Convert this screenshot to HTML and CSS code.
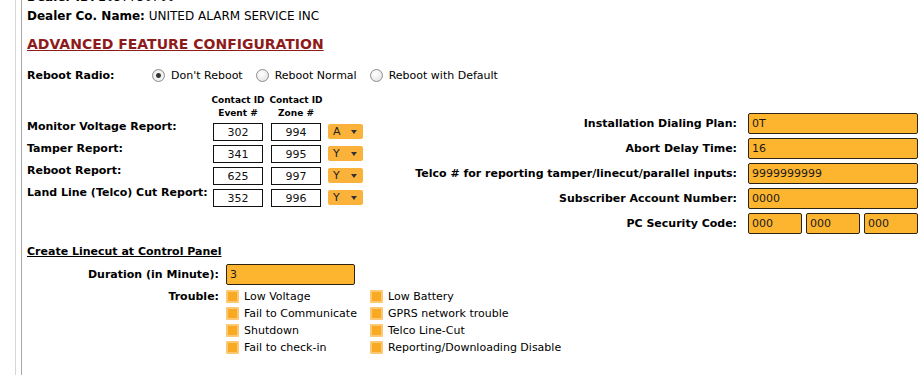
FILE: index.html
```html
<!DOCTYPE html>
<html lang="en">
<head>
  <meta charset="UTF-8" />
  <meta name="viewport" content="width=device-width, initial-scale=1.0"/>
  <title>Advanced Feature Configuration</title>
  <link rel="stylesheet" href="styles.css">
</head>
<body>
  <div class="page">
    <div class="panel">
      <div class="dealer">
        <div><b>Dealer ID:</b> 2057730700</div>
        <div><b>Dealer Co. Name:</b> UNITED ALARM SERVICE INC</div>
      </div>

      <h2 class="section-title">ADVANCED FEATURE CONFIGURATION</h2>

      <div class="reboot">
        <span class="reboot-label">Reboot Radio:</span>
        <label class="radio"><input type="radio" name="reboot" checked /> Don't Reboot</label>
        <label class="radio"><input type="radio" name="reboot" /> Reboot Normal</label>
        <label class="radio"><input type="radio" name="reboot" /> Reboot with Default</label>
      </div>

      <div class="config">
        <div class="reports">
          <div></div>
          <div class="col-head">Contact ID<br>Event #</div>
          <div class="col-head">Contact ID<br>Zone #</div>
          <div></div>

          <div class="report-label">Monitor Voltage Report:</div>
          <div><input class="code" type="text" value="302" /></div>
          <div><input class="code" type="text" value="994" /></div>
          <div><span class="pick">A</span></div>

          <div class="report-label">Tamper Report:</div>
          <div><input class="code" type="text" value="341" /></div>
          <div><input class="code" type="text" value="995" /></div>
          <div><span class="pick">Y</span></div>

          <div class="report-label">Reboot Report:</div>
          <div><input class="code" type="text" value="625" /></div>
          <div><input class="code" type="text" value="997" /></div>
          <div><span class="pick">Y</span></div>

          <div class="report-label">Land Line (Telco) Cut Report:</div>
          <div><input class="code" type="text" value="352" /></div>
          <div><input class="code" type="text" value="996" /></div>
          <div><span class="pick">Y</span></div>
        </div>

        <div class="dialing">
          <div class="field-label">Installation Dialing Plan:</div>
          <input class="field" type="text" value="0T" />

          <div class="field-label">Abort Delay Time:</div>
          <input class="field" type="text" value="16" />

          <div class="field-label">Telco # for reporting tamper/linecut/parallel inputs:</div>
          <input class="field" type="text" value="9999999999" />

          <div class="field-label">Subscriber Account Number:</div>
          <input class="field" type="text" value="0000" />

          <div class="field-label">PC Security Code:</div>
          <div class="pc-code">
            <input class="field" type="text" value="000" />
            <input class="field" type="text" value="000" />
            <input class="field" type="text" value="000" />
          </div>
        </div>
      </div>

      <h3 class="sub-title">Create Linecut at Control Panel</h3>

      <div class="linecut">
        <div class="field-label">Duration (in Minute):</div>
        <input class="field duration" type="text" value="3" />
      </div>

      <div class="linecut">
        <div class="field-label trouble-label">Trouble:</div>
        <div class="trouble">
          <label class="check"><span class="box"></span>Low Voltage</label>
          <label class="check"><span class="box"></span>Low Battery</label>
          <label class="check"><span class="box"></span>Fail to Communicate</label>
          <label class="check"><span class="box"></span>GPRS network trouble</label>
          <label class="check"><span class="box"></span>Shutdown</label>
          <label class="check"><span class="box"></span>Telco Line-Cut</label>
          <label class="check"><span class="box"></span>Fail to check-in</label>
          <label class="check"><span class="box"></span>Reporting/Downloading Disable</label>
        </div>
      </div>
    </div>
  </div>
</body>
</html>
```

FILE: styles.css
```css
body {
  margin: 0;
  font-family: "DejaVu Sans", Verdana, sans-serif;
  font-size: 11px;
  color: #000;
  background: #fff;
}
.page {
  margin-left: 15px;
  border-left: 1px solid #d6d6d6;
  padding-left: 5px;
  min-height: 100vh;
}
.panel {
  display: flow-root;
  border-left: 1px solid #a9a9a9;
  padding: 0 5px;
  min-height: 100vh;
}
.dealer {
  margin-top: -12px;
  font-size: 12px;
  line-height: 19px;
}
.section-title {
  margin: 9px 0 0;
  font-size: 14px;
  line-height: 18px;
  color: #8e1b1b;
  text-decoration: underline;
}

.reboot {
  display: flex;
  align-items: center;
  margin-top: 14px;
  height: 16px;
}
.reboot-label {
  width: 125px;
  font-weight: bold;
}
.radio {
  display: flex;
  align-items: center;
  margin-right: 13px;
}
.radio input {
  appearance: none;
  -webkit-appearance: none;
  width: 13px;
  height: 13px;
  margin: 0 6px 0 0;
  border: 1px solid #8d8d8d;
  border-radius: 50%;
  background: radial-gradient(circle at 40% 35%, #ffffff 0%, #ececec 60%, #d6d6d6 100%);
}
.radio input:checked {
  background: radial-gradient(circle, #2c2c2c 0, #3a3a3a 2px, #f4f4f4 3px, #e2e2e2 100%);
}

.config {
  display: flex;
  margin-top: 11px;
}
.reports {
  display: grid;
  grid-template-columns: 186px 58px 57px 35px;
  grid-auto-rows: 22px;
  grid-template-rows: 26px;
}
.col-head {
  width: 50px;
  font-size: 9px;
  font-weight: bold;
  line-height: 13px;
  text-align: center;
  white-space: nowrap;
  display: flex;
  flex-direction: column;
  align-items: center;
}
.report-label {
  font-weight: bold;
  line-height: 13px;
  white-space: nowrap;
}
.code {
  box-sizing: border-box;
  width: 50px;
  height: 18px;
  margin: 3px 0 0;
  padding: 0;
  border: 1px solid #111;
  font: 11px "DejaVu Sans", Verdana, sans-serif;
  text-align: center;
  color: #111;
  background: #fff;
}
.pick {
  display: flex;
  align-items: center;
  box-sizing: border-box;
  width: 35px;
  height: 15px;
  margin-top: 4px;
  padding-left: 5px;
  border-radius: 2px;
  background: #fbb23a;
  color: #222;
}
.pick::after {
  content: "";
  margin: 0 6px 0 auto;
  border-left: 3px solid transparent;
  border-right: 3px solid transparent;
  border-top: 4px solid #333;
}

.dialing {
  flex: 1;
  display: grid;
  grid-template-columns: 1fr 170px;
  grid-auto-rows: 21px;
  column-gap: 11px;
  row-gap: 4px;
  align-items: center;
  margin-top: 19px;
}
.field-label {
  font-weight: bold;
  text-align: right;
  white-space: nowrap;
}
.field {
  box-sizing: border-box;
  width: 100%;
  height: 21px;
  margin: 0;
  padding: 0 3px;
  border: 1px solid #2e2412;
  border-radius: 2px;
  background: #fdb42f;
  font: 11px "DejaVu Sans", Verdana, sans-serif;
  color: #1a1a1a;
}
.pc-code {
  display: flex;
  gap: 4px;
}

.sub-title {
  margin: 11px 0 0;
  font-size: 11px;
  line-height: 14px;
  text-decoration: underline;
}
.linecut {
  display: grid;
  grid-template-columns: 192px auto;
  column-gap: 7px;
  align-items: center;
  margin-top: 5px;
}
.linecut + .linecut {
  margin-top: 3px;
  align-items: start;
}
.duration {
  width: 129px;
}
.trouble-label {
  line-height: 17px;
}
.trouble {
  display: grid;
  grid-template-columns: 144px auto;
  grid-auto-rows: 17px;
}
.check {
  display: flex;
  align-items: center;
  white-space: nowrap;
}
.box {
  box-sizing: border-box;
  width: 13px;
  height: 13px;
  margin-right: 5px;
  border: 2px solid #fcc873;
  border-radius: 1px;
  background: #f8aa25;
}
```
